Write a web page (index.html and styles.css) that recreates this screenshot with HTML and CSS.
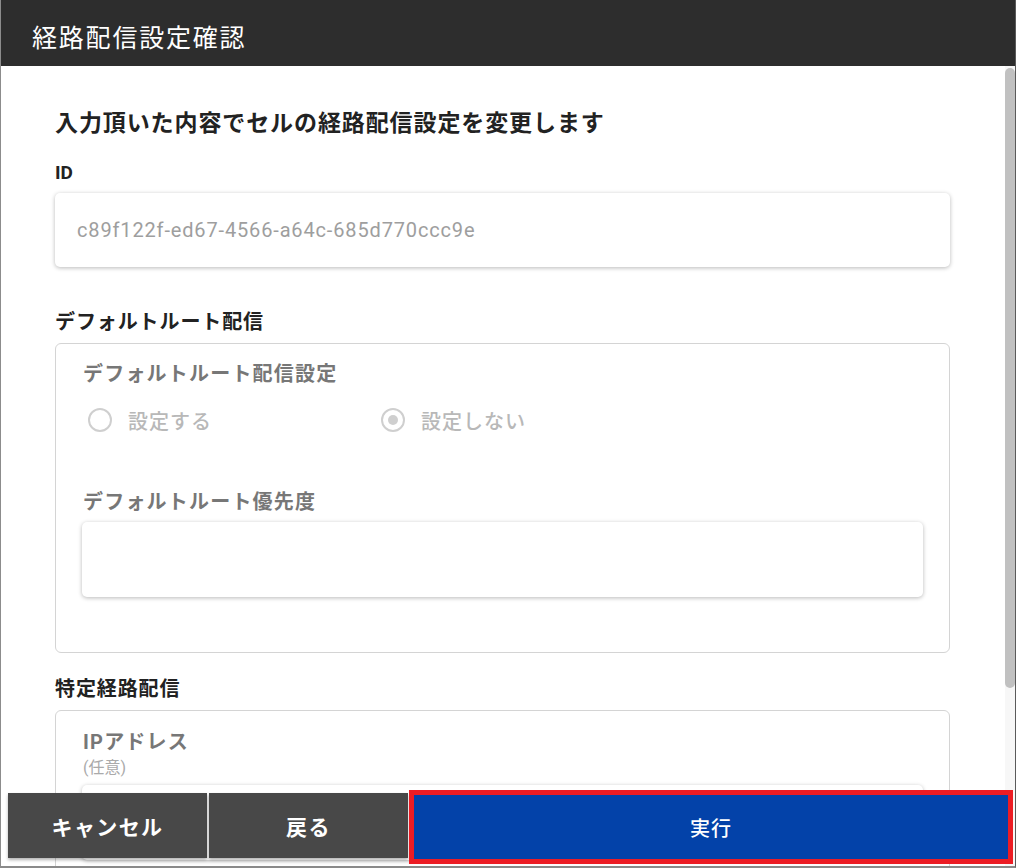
FILE: index.html
```html
<!DOCTYPE html>
<html lang="ja">
<head>
<meta charset="utf-8">
<title>経路配信設定確認</title>
<link rel="stylesheet" href="styles.css">
</head>
<body>
<div class="dialog">
  <header class="dialog-header">経路配信設定確認</header>
  <div class="dialog-main">
    <main class="dialog-body">
      <h1 class="lead">入力頂いた内容でセルの経路配信設定を変更します</h1>

      <div class="section-label label-id">ID</div>
      <div class="field field-id">c89f122f-ed67-4566-a64c-685d770ccc9e</div>

      <div class="section-label label-gap">デフォルトルート配信</div>
      <section class="group group-default">
        <div class="sub-label">デフォルトルート配信設定</div>
        <div class="radio-row">
          <label class="radio"><span class="radio-circle"></span><span class="radio-text">設定する</span></label>
          <label class="radio"><span class="radio-circle checked"></span><span class="radio-text">設定しない</span></label>
        </div>
        <div class="sub-label priority-label">デフォルトルート優先度</div>
        <div class="field field-inner"></div>
      </section>

      <div class="section-label label-gap2">特定経路配信</div>
      <section class="group group-route">
        <div class="sub-label">IPアドレス</div>
        <div class="optional">(任意)</div>
        <div class="field field-inner field-ip"></div>
      </section>
    </main>
    <div class="scrollbar"><div class="scrollbar-thumb"></div></div>
  </div>
  <footer class="dialog-footer">
    <button class="btn btn-dark">キャンセル</button>
    <button class="btn btn-dark">戻る</button>
    <button class="btn btn-primary">実行</button>
  </footer>
</div>
</body>
</html>
```
FILE: styles.css
```css
html, body {
  margin: 0;
  padding: 0;
  background: #fff;
}
body {
  font-family: Roboto, "Noto Sans CJK JP", sans-serif;
}
.dialog {
  position: relative;
  width: 1016px;
  height: 868px;
  box-sizing: border-box;
  border-left: 1px solid #8c8c8c;
  border-right: 1px solid #5a5a5a;
  border-bottom: 2px solid #8a8a8a;
  display: flex;
  flex-direction: column;
  overflow: hidden;
  background: #fff;
}
.dialog-header {
  flex: 0 0 66px;
  height: 66px;
  box-sizing: border-box;
  background: #2d2d2d;
  color: #fff;
  font-size: 25px;
  font-weight: 400;
  letter-spacing: 1.8px;
  display: flex;
  align-items: center;
  padding: 6px 0 0 31px;
}
.dialog-main {
  flex: 1 1 auto;
  display: flex;
  min-height: 0;
}
.dialog-body {
  flex: 1 1 auto;
  overflow: hidden;
  padding: 43px 55px 0 54px;
  box-sizing: border-box;
}
.scrollbar {
  flex: 0 0 10px;
  background: #f7f7f7;
  padding-top: 2px;
  box-sizing: border-box;
}
.scrollbar-thumb {
  height: 620px;
  background: #c1c1c1;
  border-radius: 5px;
}
.lead {
  margin: 0;
  font-size: 23px;
  line-height: 30px;
  font-weight: 700;
  letter-spacing: 0.9px;
  color: #222;
}
.section-label {
  font-size: 20px;
  line-height: 24px;
  font-weight: 700;
  letter-spacing: 0.9px;
  color: #222;
}
.label-id {
  margin-top: 22px;
  letter-spacing: 0;
  font-size: 19px;
}
.label-gap {
  margin-top: 43px;
}
.label-gap2 {
  margin-top: 24px;
}
.field {
  background: #fff;
  border-radius: 5px;
  box-shadow: 0 1px 4px rgba(0, 0, 0, 0.28);
  box-sizing: border-box;
}
.field-id {
  margin-top: 8px;
  height: 74px;
  padding-left: 22px;
  display: flex;
  align-items: center;
  font-size: 20px;
  letter-spacing: 0.85px;
  color: #9e9e9e;
}
.group {
  margin-top: 9px;
  border: 1px solid #d4d4d4;
  border-radius: 6px;
  padding: 17px 26px 55px 26px;
}
.sub-label {
  font-size: 20px;
  line-height: 26px;
  font-weight: 700;
  letter-spacing: 1.2px;
  color: #777;
  padding-left: 1px;
}
.radio-row {
  margin-top: 18px;
  height: 30px;
  display: flex;
  align-items: center;
  padding-left: 6px;
}
.radio {
  display: flex;
  align-items: center;
  width: 293px;
}
.radio-circle {
  width: 20px;
  height: 20px;
  border: 2px solid #cfcfcf;
  border-radius: 50%;
  box-sizing: content-box;
  position: relative;
  margin-right: 16px;
}
.radio-circle.checked::after {
  content: "";
  position: absolute;
  left: 5px;
  top: 5px;
  width: 10px;
  height: 10px;
  border-radius: 50%;
  background: #cfcfcf;
}
.radio-text {
  font-size: 20px;
  font-weight: 500;
  letter-spacing: 1px;
  color: #b8b8b8;
}
.priority-label {
  margin-top: 54px;
}
.field-inner {
  margin-top: 7px;
  height: 75px;
}
.group-route {
  padding-top: 18px;
  padding-bottom: 30px;
}
.optional {
  margin-top: 4px;
  font-size: 16px;
  line-height: 18px;
  color: #aaa;
  padding-left: 1px;
}
.field-ip {
  margin-top: 8px;
}
.dialog-footer {
  position: absolute;
  left: 7px;
  right: 3px;
  bottom: 8px;
  height: 65px;
  display: flex;
  align-items: flex-start;
  gap: 2px;
}
.btn {
  border: none;
  margin: 0;
  font-family: Roboto, "Noto Sans CJK JP", sans-serif;
  color: #fff;
  cursor: pointer;
  box-shadow: 0 2px 3px rgba(0, 0, 0, 0.3);
}
.btn-dark {
  flex: 0 0 199px;
  height: 65px;
  background: #484848;
  font-size: 21px;
  font-weight: 700;
  letter-spacing: 1.4px;
}
.btn-primary {
  flex: 0 0 604px;
  height: 74px;
  margin-top: -3px;
  margin-left: -1px;
  box-sizing: border-box;
  border: 5px solid #ec1c24;
  background: #0342a9;
  font-size: 20px;
  font-weight: 500;
  letter-spacing: 1px;
  box-shadow: none;
}
```
